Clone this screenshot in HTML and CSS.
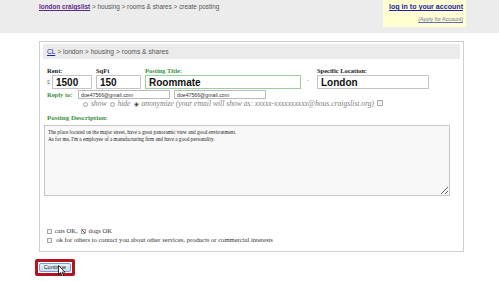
FILE: index.html
```html
<!DOCTYPE html>
<html lang="en">
<head>
    <meta charset="UTF-8" />
    <title>create posting | london craigslist</title>
    <meta name="viewport" content="width=device-width, initial-scale=1.0" />
    <link rel="stylesheet" href="styles.css">
</head>
<body>
    <header class="topbar">
        <div class="trail">
            <a href="#" class="home-link">london craigslist</a> &gt; housing &gt; rooms &amp; shares &gt; create posting
        </div>
        <div class="account">
            <a href="#" class="login-link">log in to your account</a>
            <a href="#" class="apply-link">(Apply for Account)</a>
        </div>
    </header>

    <form class="post-box" onsubmit="return false;">
        <div class="crumbbar">
            <a href="#">CL</a> &gt; london &gt; housing &gt; rooms &amp; shares
        </div>

        <div class="field-row">
            <div class="field">
                <label class="lbl">Rent:</label>
                <div class="money"><span class="pound">£</span><input type="text" class="big rent" value="1500" /></div>
            </div>
            <div class="field">
                <label class="lbl">SqFt</label>
                <input type="text" class="big sqft" value="150" />
            </div>
            <div class="field">
                <label class="lbl green">Posting Title:</label>
                <input type="text" class="big title" value="Roommate" />
            </div>
            <span class="dash">-</span>
            <div class="field">
                <label class="lbl">Specific Location:</label>
                <input type="text" class="big location" value="London" />
            </div>
        </div>

        <div class="reply-row">
            <label class="lbl green">Reply to:</label>
            <input type="text" class="email" value="doe47566@gmail.com" />
            <input type="text" class="email" value="doe47566@gmail.com" />
        </div>
        <div class="privacy">
            <label><input type="radio" name="privacy" /> show</label>
            <label><input type="radio" name="privacy" /> hide</label>
            <label><input type="radio" name="privacy" checked /> anonymize (your email will show as: xxxxx-xxxxxxxxxx@hous.craigslist.org)</label>
            <span class="help">?</span>
        </div>

        <div class="desc">
            <label class="lbl green">Posting Description:</label>
            <textarea>The place located on the major street, have a great panoramic view and good environment.
As for me, I'm a employee of a manufacturing firm and have a good personality.</textarea>
        </div>

        <div class="options">
            <div class="opt">
                <label><input type="checkbox" /> cats OK,</label>
                <label><input type="checkbox" checked /> dogs OK</label>
            </div>
            <div class="opt">
                <label><input type="checkbox" /> &nbsp;ok for others to contact you about other services, products or commercial interests</label>
            </div>
        </div>
    </form>

    <div class="actions">
        <span class="focus-ring"><button class="continue">Continue</button></span>
        <svg class="cursor" width="8" height="12" viewBox="0 0 8 12">
            <path d="M0.5 0.5 L0.5 9.5 L2.6 7.6 L4.2 11.3 L5.6 10.7 L4.1 7.1 L7 7.1 Z" fill="#fff" stroke="#000" stroke-width="0.8" stroke-linejoin="round" />
        </svg>
    </div>
</body>
</html>
```

FILE: styles.css
```css
:root {
    --header-gray: #ececec;
    --box-border: #cfcfcf;
    --label-green: #3d8f3d;
    --link-blue: #2222aa;
    --visited: #5b2a86;
    --text-gray: #555;
}

body {
    margin: 0;
    background: #fff;
    font-family: "Liberation Sans", Arial, sans-serif;
    color: #333;
}

a {
    text-decoration: underline;
}

/* top bar with trail and account box */
.topbar {
    display: flex;
    justify-content: space-between;
    align-items: flex-start;
    height: 33px;
    background: var(--header-gray);
    padding: 0 33px 0 39px;
}

.trail {
    font-size: 6.4px;
    color: var(--text-gray);
    padding-top: 3px;
}

.home-link {
    color: var(--visited);
    font-weight: bold;
}

.account {
    display: flex;
    flex-direction: column;
    align-items: flex-end;
    width: 83px;
    height: 27px;
    box-sizing: border-box;
    padding: 3px 3px 0 0;
    background: #ffffd2;
}

.login-link {
    color: var(--link-blue);
    font-size: 7.1px;
    font-weight: bold;
}

.apply-link {
    color: #6a6ab0;
    font-size: 5.3px;
    margin-top: 5px;
}

/* main posting box */
.post-box {
    width: 425px;
    height: 211px;
    box-sizing: border-box;
    margin: 8px 0 0 39px;
    padding: 2px 3px;
    border: 1px solid var(--box-border);
    font-family: "Liberation Serif", "Times New Roman", serif;
}

.crumbbar {
    height: 15px;
    background: #ebebeb;
    padding-left: 4px;
    font-family: "Liberation Sans", Arial, sans-serif;
    font-size: 6.7px;
    line-height: 15px;
    color: var(--text-gray);
}

.crumbbar a {
    color: var(--link-blue);
}

.lbl {
    font-size: 6.5px;
    font-weight: bold;
    color: #222;
}

.lbl.green {
    color: var(--label-green);
}

.field-row {
    display: flex;
    align-items: flex-end;
    gap: 4px;
    padding: 8px 0 0 4px;
}

.field {
    display: flex;
    flex-direction: column;
    gap: 1px;
}

.money {
    display: flex;
    align-items: center;
    gap: 2px;
}

.pound {
    font-size: 6px;
    color: #444;
}

input.big {
    height: 14px;
    box-sizing: border-box;
    border: 1px solid #c4c4c4;
    padding: 0 0 0 3px;
    font-family: "Liberation Sans", Arial, sans-serif;
    font-size: 10px;
    font-weight: bold;
    color: #111;
    background: #fff;
}

.rent { width: 40px; }
.sqft { width: 45px; }
.title { width: 156px; border-color: #9ccf9c !important; }
.location { width: 112px; }

.dash {
    font-size: 6px;
    color: #888;
    padding: 0 4px 6px 2px;
}

.reply-row {
    display: flex;
    align-items: center;
    gap: 4px;
    padding: 1px 0 0 4px;
}

.reply-row .lbl {
    width: 27px;
}

input.email {
    width: 92px;
    height: 9px;
    box-sizing: border-box;
    border: 1px solid #bbb;
    padding: 0 0 0 2px;
    font-family: "Liberation Sans", Arial, sans-serif;
    font-size: 5.2px;
    color: #333;
}

.privacy {
    display: flex;
    align-items: center;
    gap: 3px;
    height: 8px;
    padding-left: 40px;
    font-size: 7.6px;
    font-style: italic;
    color: #808080;
}

/* small flat radios and checkboxes like the old form */
.privacy input,
.opt input {
    appearance: none;
    width: 5px;
    height: 5px;
    margin: 0 1px 0 0;
    border: 1px solid #a8a8a8;
    background: #f2f2f2;
    vertical-align: -1px;
}

.privacy input {
    border-radius: 50%;
}

.privacy input:checked {
    background: radial-gradient(circle, #333 45%, #e8e8e8 55%);
}

.opt input:checked {
    background: linear-gradient(45deg, transparent 40%, #555 40%, #555 60%, transparent 60%), #f2f2f2;
}

.help {
    font-size: 4px;
    border: 1px solid #aaa;
    padding: 0 1px;
    font-style: normal;
    line-height: 4px;
    color: #999;
}

.desc {
    display: flex;
    flex-direction: column;
    gap: 3px;
    padding-top: 7px;
}

.desc .lbl {
    padding-left: 4px;
    font-size: 7px;
}

.desc textarea {
    width: 406px;
    height: 71px;
    box-sizing: border-box;
    margin: 0 0 0 1px;
    padding: 3px 3px;
    border: 1px solid #c8c8c8;
    background: #f8f8f8;
    font-family: "Liberation Serif", "Times New Roman", serif;
    font-size: 5.2px;
    line-height: 7px;
    color: #222;
    resize: both;
}

.options {
    padding: 30px 0 0 4px;
    font-size: 6.6px;
    color: #333;
}

.opt {
    display: flex;
    gap: 3px;
    height: 9px;
    align-items: center;
}

/* continue button with highlight frame */
.actions {
    position: relative;
    display: flex;
    padding: 7px 0 0 35px;
}

.focus-ring {
    border: 3px solid #b3141e;
    border-radius: 2px;
    padding: 1px;
}

.continue {
    display: block;
    width: 32px;
    height: 9px;
    padding: 0;
    border: 1px solid #7a9cc0;
    border-radius: 2px;
    background: linear-gradient(#e8f2fb, #c9def2);
    font-family: "Liberation Sans", Arial, sans-serif;
    font-size: 5.6px;
    line-height: 7px;
    color: #222;
}

.cursor {
    position: absolute;
    left: 58px;
    top: 13px;
}
```
